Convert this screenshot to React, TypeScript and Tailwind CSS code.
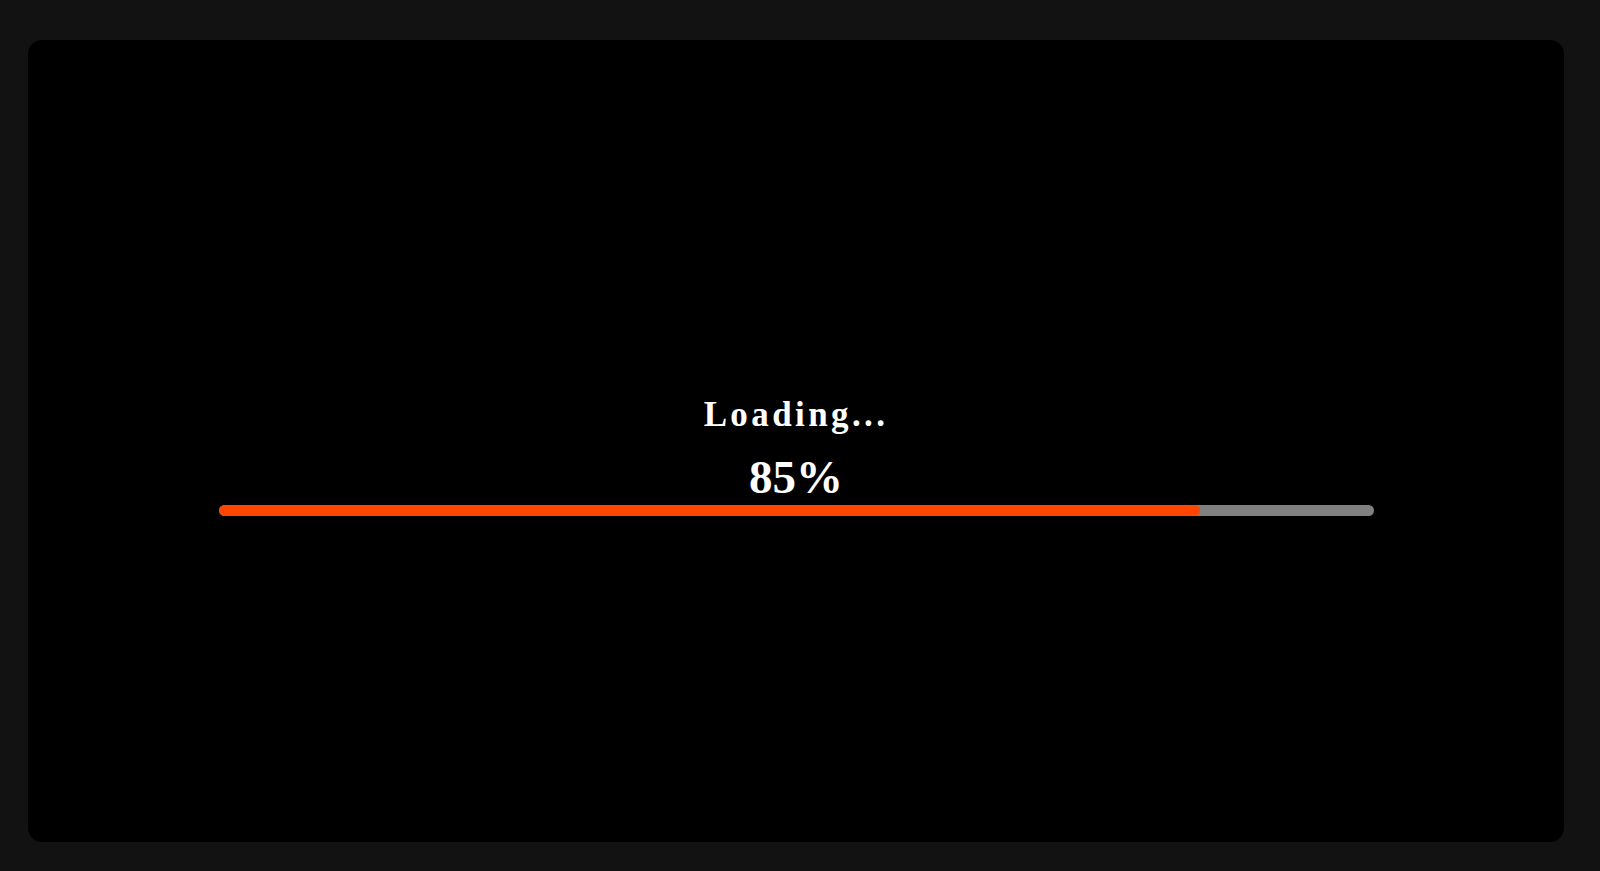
export default function App() {
  const progress = 85;

  return (
    <main className="w-full min-h-screen bg-[#121212] pt-10 pl-7 pr-9 pb-[29px]">
      <div className="w-full h-[802px] bg-black rounded-[14px] flex flex-col justify-center items-center">
        <div className="w-[1155px] flex flex-col items-center text-white font-['Liberation_Serif',serif] font-bold mt-[30px]">
          <p className="text-[35px] tracking-[3.4px] leading-none">Loading...</p>
          <p className="text-[47px] leading-none mt-[22px]">{progress}%</p>
          <div className="w-full h-[11px] mt-[4px] bg-[#808080] rounded-full overflow-hidden">
            <div
              className="h-full bg-[#ff4500] rounded-full"
              style={{ width: `${progress}%` }}
            />
          </div>
        </div>
      </div>
    </main>
  );
}
